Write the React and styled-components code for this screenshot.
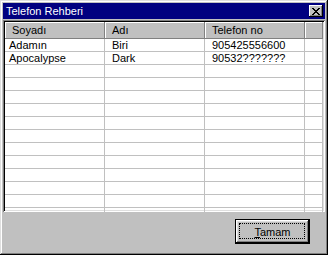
import React from 'react';
import styled, { createGlobalStyle } from 'styled-components';

const GlobalStyle = createGlobalStyle`
	html, body {
		margin: 0;
		padding: 0;
		background: #c0c0c0;
	}
	body {
		font-family: "Liberation Sans", Arial, sans-serif;
		font-size: 11px;
	}
`;

const Window = styled.div`
	width: 328px;
	height: 255px;
	box-sizing: border-box;
	padding: 3px;
	background: #c0c0c0;
	box-shadow: inset -1px -1px #000, inset 1px 1px #dfdfdf, inset -2px -2px #808080, inset 2px 2px #fff;
	display: flex;
	flex-direction: column;
`;

const TitleBar = styled.div`
	height: 16px;
	background: #000080;
	color: #fff;
	display: flex;
	align-items: center;
	justify-content: space-between;
	padding: 0 2px 0 3px;
	font-size: 11px;
	line-height: 16px;
`;

const CloseButton = styled.div`
	width: 14px;
	height: 12px;
	box-sizing: border-box;
	background: #c0c0c0;
	box-shadow: inset -1px -1px #000, inset 1px 1px #fff, inset -2px -2px #808080;
	display: flex;
	align-items: center;
	justify-content: center;
	padding-right: 1px;
`;

const ListView = styled.div`
	margin-top: 1px;
	height: 192px;
	box-sizing: border-box;
	padding: 2px;
	background: #fff;
	box-shadow: inset 1px 1px #808080, inset -1px -1px #fff, inset 2px 2px #000, inset -2px -2px #dfdfdf;
	overflow: hidden;
`;

const Grid = styled.div`
	display: grid;
	grid-template-columns: 100px 100px 100px 1fr;
`;

const HeaderCell = styled.div`
	height: 17px;
	box-sizing: border-box;
	background: #c0c0c0;
	box-shadow: inset -1px -1px #808080, inset 1px 1px #fff;
	padding-left: 7px;
	line-height: 16px;
	color: #000;
	white-space: nowrap;
	overflow: hidden;
`;

const Cell = styled.div`
	height: 13px;
	box-sizing: border-box;
	border-right: 1px solid #c0c0c0;
	border-bottom: 1px solid #c0c0c0;
	padding-left: ${p => (p.first ? 4 : 7)}px;
	line-height: 12px;
	color: #000;
	white-space: nowrap;
	overflow: hidden;
`;

const Footer = styled.div`
	flex: 1;
	display: flex;
	justify-content: flex-end;
	align-items: flex-start;
	padding: 7px 15px 0 0;
`;

const Button = styled.button`
	width: 75px;
	height: 25px;
	box-sizing: border-box;
	border: 1px solid #000;
	background: #c0c0c0;
	box-shadow: inset -1px -1px #000, inset 1px 1px #fff, inset -2px -2px #808080, inset 2px 2px #dfdfdf;
	padding: 0;
	font-family: "Liberation Sans", Arial, sans-serif;
	font-size: 11px;
	color: #000;
	position: relative;
	display: flex;
	align-items: center;
	justify-content: center;
	outline: none;
`;

const FocusRect = styled.span`
	position: absolute;
	left: 3px;
	top: 3px;
	right: 4px;
	bottom: 4px;
	border: 1px dotted #000;
`;

const Hotkey = styled.span`
	text-decoration: underline;
`;

const rows = [
	['Adamın', 'Biri', '905425556600'],
	['Apocalypse', 'Dark', '90532?????????'.slice(0, 12)],
];

const CloseIcon = () => (
	<svg width="8" height="7" viewBox="0 0 8 7" shapeRendering="crispEdges">
		<path
			d="M0 0h2v1H0zM6 0h2v1H6zM1 1h2v1H1zM5 1h2v1H5zM2 2h4v1H2zM3 3h2v1H3zM2 4h4v1H2zM1 5h2v1H1zM5 5h2v1H5zM0 6h2v1H0zM6 6h2v1H6z"
			fill="#000"
		/>
	</svg>
);

export default function App() {
	const filled = [...rows];
	while (filled.length < 14) filled.push(['', '', '']);
	return (
		<>
			<GlobalStyle />
			<Window>
				<TitleBar>
					<span>Telefon Rehberi</span>
					<CloseButton>
						<CloseIcon />
					</CloseButton>
				</TitleBar>
				<ListView>
					<Grid>
						<HeaderCell>Soyadı</HeaderCell>
						<HeaderCell>Adı</HeaderCell>
						<HeaderCell>Telefon no</HeaderCell>
						<HeaderCell />
						{filled.map((r, i) => (
							<React.Fragment key={i}>
								<Cell first>{r[0]}</Cell>
								<Cell>{r[1]}</Cell>
								<Cell>{r[2]}</Cell>
								<Cell />
							</React.Fragment>
						))}
					</Grid>
				</ListView>
				<Footer>
					<Button>
						<FocusRect />
						<span>
							<Hotkey>T</Hotkey>amam
						</span>
					</Button>
				</Footer>
			</Window>
		</>
	);
}
